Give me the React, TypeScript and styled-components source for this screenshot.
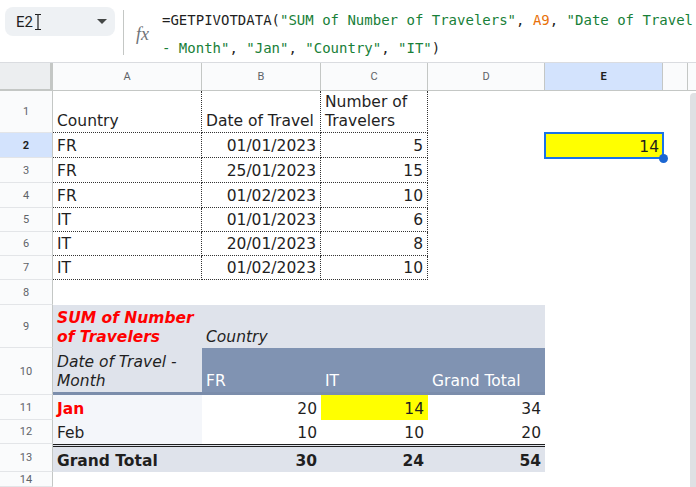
import React from "react";
import styled, { createGlobalStyle, css } from "styled-components";

const Global = createGlobalStyle`
  html, body { margin: 0; padding: 0; background: #fff; overflow: hidden; }
  #root { width: 696px; height: 487px; }
`;

const Page = styled.div`
  width: 696px;
  height: 487px;
  display: flex;
  flex-direction: column;
  overflow: hidden;
  background: #fff;
`;

const FormulaBar = styled.div`
  height: 63px;
  flex: none;
  box-sizing: border-box;
  border-bottom: 1px solid #dadce0;
  display: flex;
  align-items: flex-start;
  padding-left: 5px;
`;

const NameBox = styled.div`
  margin-top: 7px;
  width: 110px;
  height: 29px;
  box-sizing: border-box;
  border-radius: 8px;
  background: #eef1f4;
  display: flex;
  align-items: center;
  padding: 0 8px 0 11px;
  font-family: Roboto, "Liberation Sans", sans-serif;
  font-size: 15px;
  color: #1f1f1f;
`;

const NameText = styled.span`
  margin-right: 1px;
`;

const Spacer = styled.span`
  flex: 1;
`;

const Divider = styled.div`
  margin: 10px 0 0 8px;
  width: 1px;
  height: 45px;
  background: #c4c7c5;
`;

const FxIcon = styled.div`
  margin: 22px 0 0 12px;
  width: 26px;
  line-height: 24px;
  font-family: "Liberation Serif", "DejaVu Serif", serif;
  font-style: italic;
  font-size: 18px;
  color: #6f7378;
`;

const Formula = styled.div`
  padding-top: 6px;
  font-family: "DejaVu Sans Mono", "Liberation Mono", monospace;
  font-size: 14px;
  line-height: 28px;
  color: #1f1f1f;
  white-space: pre;
`;

const Str = styled.span`
  color: #188038;
`;

const Ref = styled.span`
  color: #e8710a;
`;

const Sheet = styled.div`
  flex: 1;
  display: grid;
  grid-template-columns: 53px 149px 119px 107px 117px 118px 25px 8px;
  grid-template-rows: 28px 42px 25px 25px 25px 24px 24px 24px 25px 43px 47px 25px 24px 28px 1fr;
`;

const Corner = styled.div`
  box-sizing: border-box;
  background: #eceef0;
  border-right: 3px solid #c4c7c5;
  border-bottom: 2px solid #c4c7c5;
`;

const ColHead = styled.div<{ $active?: boolean }>`
  box-sizing: border-box;
  border-right: 1px solid #c4c7c5;
  border-bottom: 1px solid #c4c7c5;
  background: ${(p) => (p.$active ? "#d3e3fd" : "#fafbfc")};
  display: flex;
  align-items: center;
  justify-content: center;
  font-family: Roboto, "Liberation Sans", sans-serif;
  font-size: 11px;
  font-weight: ${(p) => (p.$active ? 700 : 400)};
  color: ${(p) => (p.$active ? "#1f1f1f" : "#5f6368")};
`;

const ScrollHead = styled.div`
  box-sizing: border-box;
  border-bottom: 1px solid #c4c7c5;
  background: #fafbfc;
`;

const RowHead = styled.div<{ $active?: boolean }>`
  box-sizing: border-box;
  border-right: 1px solid #c4c7c5;
  border-bottom: 1px solid #e3e5e8;
  background: ${(p) => (p.$active ? "#d3e3fd" : "#fafbfc")};
  display: flex;
  align-items: center;
  justify-content: center;
  font-family: Roboto, "Liberation Sans", sans-serif;
  font-size: 11px;
  font-weight: ${(p) => (p.$active ? 700 : 400)};
  color: ${(p) => (p.$active ? "#1f1f1f" : "#5f6368")};
`;

type CellProps = {
  $align?: "left" | "right";
  $bg?: string;
  $fg?: string;
  $bold?: boolean;
  $italic?: boolean;
  $dotted?: boolean;
  $rule?: "blue" | "double";
};

const Cell = styled.div<CellProps>`
  box-sizing: border-box;
  min-width: 0;
  display: flex;
  flex-direction: column;
  justify-content: flex-end;
  align-items: ${(p) => (p.$align === "right" ? "flex-end" : "flex-start")};
  text-align: ${(p) => p.$align ?? "left"};
  padding: 0 4px 1px 4px;
  background: ${(p) => p.$bg ?? "transparent"};
  color: ${(p) => p.$fg ?? "#1f1f1f"};
  font-family: "DejaVu Sans", Verdana, sans-serif;
  font-size: 15.5px;
  line-height: 19px;
  font-weight: ${(p) => (p.$bold ? 700 : 400)};
  font-style: ${(p) => (p.$italic ? "italic" : "normal")};
  ${(p) =>
    p.$dotted &&
    css`
      border-right: 1px dotted #333;
      border-bottom: 1px dotted #333;
    `}
  ${(p) =>
    p.$rule === "blue" &&
    css`
      border-bottom: 3px solid #7b8dab;
    `}
  ${(p) =>
    p.$rule === "double" &&
    css`
      border-top: 3px double #1f1f1f;
    `}
`;

const SelectedCell = styled(Cell)`
  position: relative;
  &::after {
    content: "";
    position: absolute;
    left: -1px;
    top: -1px;
    right: -1px;
    bottom: -1px;
    border: 2px solid #1a73e8;
    pointer-events: none;
  }
`;

const Handle = styled.span`
  position: absolute;
  right: -5px;
  bottom: -5px;
  width: 9px;
  height: 9px;
  border-radius: 50%;
  background: #1b66d2;
  z-index: 2;
`;

const Track = styled.div`
  grid-column: 8;
  grid-row: 2 / -1;
  box-sizing: border-box;
  padding: 2px 0 0 2px;
  display: flex;
`;

const Thumb = styled.div`
  flex: 1;
  background: #dfe1e4;
  border-radius: 4px 0 0 0;
`;

const LIGHT = "#dfe3eb";
const DARK = "#8093b2";
const TINT = "#f4f6fa";
const YELLOW = "#ffff00";
const RED = "#ff0000";

const data: [string, string, string][] = [
  ["FR", "01/01/2023", "5"],
  ["FR", "25/01/2023", "15"],
  ["FR", "01/02/2023", "10"],
  ["IT", "01/01/2023", "6"],
  ["IT", "20/01/2023", "8"],
  ["IT", "01/02/2023", "10"],
];

const Empty = ({ n }: { n: number }) => (
  <>
    {Array.from({ length: n }, (_, i) => (
      <Cell key={i} />
    ))}
  </>
);

const IBeam = () => (
  <svg width="8" height="18" viewBox="0 0 8 18">
    <path d="M1 1.5h2.2c.5 0 .8.3.8.8 0-.5.3-.8.8-.8H7M4 2.3v13.4M1 16.5h2.2c.5 0 .8-.3.8-.8 0 .5.3.8.8.8H7" fill="none" stroke="#1f1f1f" strokeWidth="1.2" />
  </svg>
);

const Caret = () => (
  <svg width="10" height="5" viewBox="0 0 10 5">
    <path d="M0 0h10L5 5z" fill="#444746" />
  </svg>
);

export default function App() {
  return (
    <Page>
      <Global />
      <FormulaBar>
        <NameBox>
          <NameText>E2</NameText>
          <IBeam />
          <Spacer />
          <Caret />
        </NameBox>
        <Divider />
        <FxIcon>fx</FxIcon>
        <Formula>
          <div>
            =GETPIVOTDATA(<Str>"SUM of Number of Travelers"</Str>, <Ref>A9</Ref>, <Str>"Date of Travel</Str>
          </div>
          <div>
            <Str>- Month"</Str>, <Str>"Jan"</Str>, <Str>"Country"</Str>, <Str>"IT"</Str>)
          </div>
        </Formula>
      </FormulaBar>

      <Sheet>
        <Corner />
        {["A", "B", "C", "D", "E", "F"].map((c) => (
          <ColHead key={c} $active={c === "E"}>
            {c === "F" ? "" : c}
          </ColHead>
        ))}
        <ScrollHead />
        <Track>
          <Thumb />
        </Track>

        {/* Row 1 */}
        <RowHead>1</RowHead>
        <Cell $dotted>Country</Cell>
        <Cell $dotted>Date of Travel</Cell>
        <Cell $dotted>Number of Travelers</Cell>
        <Empty n={3} />

        {data.map(([country, date, num], i) => (
          <React.Fragment key={i}>
            <RowHead $active={i === 0}>{i + 2}</RowHead>
            <Cell $dotted>{country}</Cell>
            <Cell $dotted $align="right">
              {date}
            </Cell>
            <Cell $dotted $align="right">
              {num}
            </Cell>
            <Cell />
            {i === 0 ? (
              <SelectedCell $align="right" $bg={YELLOW}>
                14
                <Handle />
              </SelectedCell>
            ) : (
              <Cell />
            )}
            <Cell />
          </React.Fragment>
        ))}

        {/* Row 8 */}
        <RowHead>8</RowHead>
        <Empty n={6} />

        {/* Row 9 */}
        <RowHead>9</RowHead>
        <Cell $bg={LIGHT} $fg={RED} $bold $italic>
          SUM of Number of Travelers
        </Cell>
        <Cell $bg={LIGHT} $italic>
          Country
        </Cell>
        <Cell $bg={LIGHT} />
        <Cell $bg={LIGHT} />
        <Empty n={2} />

        {/* Row 10 */}
        <RowHead>10</RowHead>
        <Cell $bg={LIGHT} $italic $rule="blue">
          Date of Travel - Month
        </Cell>
        <Cell $bg={DARK} $fg="#ffffff" $rule="blue">
          FR
        </Cell>
        <Cell $bg={DARK} $fg="#ffffff" $rule="blue">
          IT
        </Cell>
        <Cell $bg={DARK} $fg="#ffffff" $rule="blue">
          Grand Total
        </Cell>
        <Empty n={2} />

        {/* Row 11 */}
        <RowHead>11</RowHead>
        <Cell $bg={TINT} $fg={RED} $bold>
          Jan
        </Cell>
        <Cell $align="right">20</Cell>
        <Cell $align="right" $bg={YELLOW}>
          14
        </Cell>
        <Cell $align="right">34</Cell>
        <Empty n={2} />

        {/* Row 12 */}
        <RowHead>12</RowHead>
        <Cell $bg={TINT}>Feb</Cell>
        <Cell $align="right">10</Cell>
        <Cell $align="right">10</Cell>
        <Cell $align="right">20</Cell>
        <Empty n={2} />

        {/* Row 13 */}
        <RowHead>13</RowHead>
        <Cell $bg={LIGHT} $bold $rule="double">
          Grand Total
        </Cell>
        <Cell $bg={LIGHT} $bold $align="right" $rule="double">
          30
        </Cell>
        <Cell $bg={LIGHT} $bold $align="right" $rule="double">
          24
        </Cell>
        <Cell $bg={LIGHT} $bold $align="right" $rule="double">
          54
        </Cell>
        <Empty n={2} />

        {/* Row 14 */}
        <RowHead>14</RowHead>
        <Empty n={6} />
      </Sheet>
    </Page>
  );
}
